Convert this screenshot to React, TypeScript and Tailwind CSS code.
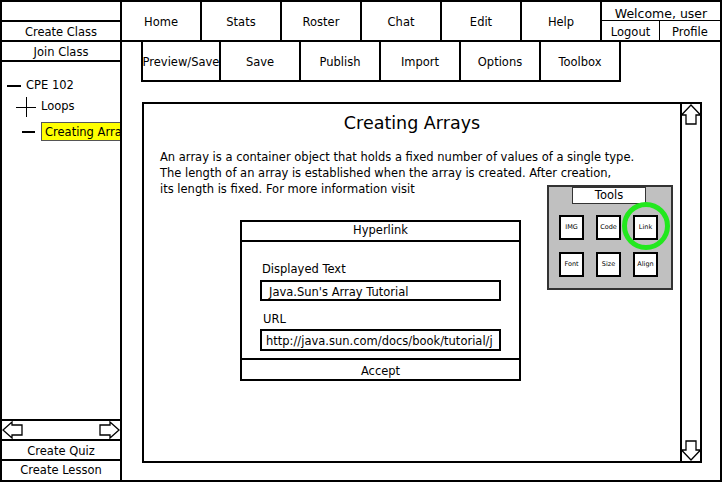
import type { ReactNode } from 'react'

function NavItem({ children }: { children: ReactNode }) {
  return (
    <div className="w-[80px] h-full border-r-2 border-black flex items-center justify-center pt-[4px]">
      {children}
    </div>
  )
}

function ToolItem({ children, first }: { children: ReactNode; first?: boolean }) {
  return (
    <div
      className={`w-[80px] h-[40px] border-b-2 border-r-2 border-black flex items-center justify-center whitespace-nowrap pt-[4px] ${first ? 'border-l-2' : ''}`}
    >
      {children}
    </div>
  )
}

function ToolButton({ label }: { label: string }) {
  return (
    <div className="w-[25px] h-[25px] bg-white border-2 border-black flex items-center justify-center text-[6.5px] leading-none text-black">
      {label}
    </div>
  )
}

function ArrowUp() {
  return (
    <svg width="20" height="21" viewBox="0 0 20 21" className="block">
      <polygon points="10,1 19.5,11 15,11 15,20 5,20 5,11 0.5,11" fill="white" stroke="black" strokeWidth="1.3" />
    </svg>
  )
}

function ArrowDown() {
  return (
    <svg width="20" height="21" viewBox="0 0 20 21" className="block">
      <polygon points="10,20 19.5,10 15,10 15,1 5,1 5,10 0.5,10" fill="white" stroke="black" strokeWidth="1.3" />
    </svg>
  )
}

function ArrowLeft() {
  return (
    <svg width="21" height="18" viewBox="0 0 21 18" className="block">
      <polygon points="1,9 10,1 10,4 20,4 20,14 10,14 10,17" fill="white" stroke="black" strokeWidth="1.3" />
    </svg>
  )
}

function ArrowRight() {
  return (
    <svg width="21" height="18" viewBox="0 0 21 18" className="block">
      <polygon points="20,9 11,1 11,4 1,4 1,14 11,14 11,17" fill="white" stroke="black" strokeWidth="1.3" />
    </svg>
  )
}

export default function App() {
  return (
    <div className="w-[722px] h-[482px] border-2 border-black bg-white flex text-black text-[11.5px] leading-none font-['DejaVu_Sans',sans-serif] overflow-hidden">
      {/* Left sidebar */}
      <aside className="w-[120px] shrink-0 border-r-2 border-black flex flex-col">
        <div className="h-[20px] border-b-2 border-black" />
        <div className="h-[20px] border-b-2 border-black flex items-center justify-center pt-[4px]">Create Class</div>
        <div className="h-[20px] border-b-2 border-black flex items-center justify-center pt-[4px]">Join Class</div>

        {/* Course tree */}
        <div className="flex-1 flex flex-col pt-[14px] overflow-hidden">
          <div className="h-[20px] flex items-center pl-[5px] gap-[5px]">
            <span className="w-[14px] h-[2px] bg-black" />
            <span>CPE 102</span>
          </div>
          <div className="h-[20px] mt-[1px] flex items-center pl-[14px] gap-[5px]">
            <svg width="20" height="20" viewBox="0 0 20 20" className="block">
              <line x1="0" y1="10.5" x2="20" y2="10.5" stroke="black" strokeWidth="1" />
              <line x1="10.5" y1="0" x2="10.5" y2="20" stroke="black" strokeWidth="1" />
            </svg>
            <span>Loops</span>
          </div>
          <div className="h-[19px] mt-[5px] flex items-center pl-[20px] gap-[6px]">
            <span className="w-[13px] h-[2px] bg-black shrink-0" />
            <span className="h-[19px] bg-[#ffff00] border border-[#555] flex items-center pl-[3px] pt-[2px] pr-2 whitespace-nowrap">
              Creating Arrays
            </span>
          </div>
        </div>

        <div className="h-[20px] border-t-2 border-black flex items-center justify-between">
          <ArrowLeft />
          <ArrowRight />
        </div>
        <div className="h-[20px] border-t-2 border-black flex items-center justify-center pt-[4px]">Create Quiz</div>
        <div className="h-[21px] border-t-2 border-black flex items-center justify-center">Create Lesson</div>
      </aside>

      {/* Main area */}
      <main className="flex-1 flex flex-col">
        <nav className="h-[40px] border-b-2 border-black flex shrink-0">
          <NavItem>Home</NavItem>
          <NavItem>Stats</NavItem>
          <NavItem>Roster</NavItem>
          <NavItem>Chat</NavItem>
          <NavItem>Edit</NavItem>
          <NavItem>Help</NavItem>
          <div className="flex-1 flex flex-col">
            <div className="h-[19px] border-b border-black flex items-center justify-center pt-[6px] text-[12.5px]">
              Welcome, user
            </div>
            <div className="flex-1 flex">
              <div className="w-[58px] border-r border-black flex items-center justify-center pt-[4px]">Logout</div>
              <div className="flex-1 flex items-center justify-center pt-[4px]">Profile</div>
            </div>
          </div>
        </nav>

        <div className="flex ml-[19px] shrink-0">
          <ToolItem first>Preview/Save</ToolItem>
          <ToolItem>Save</ToolItem>
          <ToolItem>Publish</ToolItem>
          <ToolItem>Import</ToolItem>
          <ToolItem>Options</ToolItem>
          <ToolItem>Toolbox</ToolItem>
        </div>

        {/* Lesson editor panel */}
        <div className="mt-[20px] ml-[20px] w-[560px] h-[361px] border-2 border-black flex">
          <div className="flex-1 relative flex flex-col">
            <h1 className="pt-[9px] h-[28px] text-[17.5px] leading-[20px] text-center">Creating Arrays</h1>
            <p className="mt-[17px] px-[16px] leading-[16px]">
              An array is a container object that holds a fixed number of values of a single type.
              <br />
              The length of an array is established when the array is created. After creation,
              <br />
              its length is fixed. For more information visit
            </p>

            {/* Hyperlink dialog */}
            <div className="mt-[23px] ml-[96px] w-[281px] h-[161px] border-2 border-black flex flex-col bg-white">
              <div className="h-[20px] border-b-2 border-black flex items-center justify-center">Hyperlink</div>
              <div className="flex-1 flex flex-col pt-[19px] pl-[18px]">
                <div className="h-[14px] pl-[2px] flex items-center pt-[4px]">Displayed Text</div>
                <div className="mt-[5px] w-[241px] h-[21px] border-2 border-black flex items-center pl-[7px] pt-[4px]">
                  Java.Sun's Array Tutorial
                </div>
                <div className="mt-[10px] h-[14px] pl-[3px] flex items-center pt-[4px]">URL</div>
                <div className="mt-[4px] w-[241px] h-[22px] border-2 border-black flex items-center pl-[4px] pt-[4px] overflow-hidden whitespace-nowrap">
                  http://java.sun.com/docs/book/tutorial/j
                </div>
              </div>
              <div className="h-[21px] border-t-2 border-black flex items-center justify-center pt-[4px]">Accept</div>
            </div>

            {/* Floating tools palette */}
            <div className="absolute left-[403px] top-[81px] w-[126px] h-[105px] bg-[#c0c0c0] border-2 border-[#333] flex flex-col">
              <div className="ml-[23px] w-[74px] h-[17px] bg-white border border-[#333] flex items-center justify-center">
                Tools
              </div>
              <div className="mt-[11px] ml-[10px] grid grid-cols-[25px_25px_25px] gap-x-[12px] gap-y-[12px]">
                <ToolButton label="IMG" />
                <ToolButton label="Code" />
                <ToolButton label="Link" />
                <ToolButton label="Font" />
                <ToolButton label="Size" />
                <ToolButton label="Align" />
              </div>
            </div>

            {/* Highlight ring */}
            <svg width="54" height="54" viewBox="0 0 54 54" className="absolute left-[475px] top-[95px]">
              <circle cx="27" cy="27" r="21.5" fill="none" stroke="#22e81e" strokeWidth="5" />
            </svg>
          </div>

          {/* Vertical scrollbar */}
          <div className="w-[20px] border-l-2 border-black flex flex-col justify-between items-center">
            <ArrowUp />
            <ArrowDown />
          </div>
        </div>
      </main>
    </div>
  )
}
